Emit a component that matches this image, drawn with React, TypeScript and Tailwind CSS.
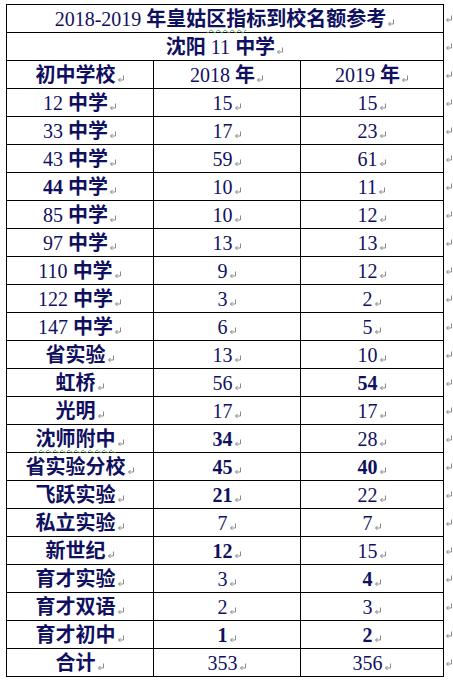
import React from 'react'

type Row = { name: string; a: string; b: string; nb?: boolean; ab?: boolean; bb?: boolean; wavy?: boolean }

const rows: Row[] = [
  { name: '12 中学', a: '15', b: '15' },
  { name: '33 中学', a: '17', b: '23' },
  { name: '43 中学', a: '59', b: '61' },
  { name: '44 中学', a: '10', b: '11', nb: true },
  { name: '85 中学', a: '10', b: '12' },
  { name: '97 中学', a: '13', b: '13' },
  { name: '110 中学', a: '9', b: '12' },
  { name: '122 中学', a: '3', b: '2' },
  { name: '147 中学', a: '6', b: '5' },
  { name: '省实验', a: '13', b: '10' },
  { name: '虹桥', a: '56', b: '54', bb: true },
  { name: '光明', a: '17', b: '17' },
  { name: '沈师附中', a: '34', b: '28', ab: true, wavy: true },
  { name: '省实验分校', a: '45', b: '40', ab: true, bb: true },
  { name: '飞跃实验', a: '21', b: '22', ab: true },
  { name: '私立实验', a: '7', b: '7' },
  { name: '新世纪', a: '12', b: '15', ab: true },
  { name: '育才实验', a: '3', b: '4', bb: true },
  { name: '育才双语', a: '2', b: '3' },
  { name: '育才初中', a: '1', b: '2', ab: true, bb: true },
  { name: '合计', a: '353', b: '356' },
]

function Mark() {
  return (
    <svg width="8" height="8" viewBox="0 0 8 8" className="ml-[1px] inline-block self-end mb-[5px] shrink-0">
      <path d="M6.5 0.5 V5 H1.5" fill="none" stroke="#8a8a8a" strokeWidth="1" />
      <path d="M3.5 3 L1.5 5 L3.5 7" fill="none" stroke="#8a8a8a" strokeWidth="1" />
    </svg>
  )
}

// CJK runs bold, digits/latin regular (mimics the Word screenshot)
function Txt({ text, boldDigits }: { text: string; boldDigits?: boolean }) {
  const parts = text.split(/([\u4e00-\u9fff]+)/).filter(Boolean)
  return (
    <>
      {parts.map((p, i) =>
        /[\u4e00-\u9fff]/.test(p) ? (
          <span key={i} className="font-bold">{p}</span>
        ) : (
          <span key={i} className={boldDigits ? 'font-bold' : 'font-normal'}>{p}</span>
        )
      )}
    </>
  )
}

function Cell(props: { children: React.ReactNode; className?: string }) {
  return (
    <div className={'flex h-[27px] items-center justify-center ' + (props.className ?? '')}>
      <span className="whitespace-pre leading-none">{props.children}</span>
      <Mark />
    </div>
  )
}

export default function App() {
  return (
    <div
      className="h-[682px] w-[453px] overflow-hidden bg-white pl-[6px] pt-[4px] text-[20px] text-[#101060]"
      style={{ fontFamily: '"Liberation Serif", "Noto Sans CJK SC", serif' }}
    >
      <div className="flex">
        <div className="w-[443px] border border-black">
          <Cell>
            <Txt text="2018-2019 年皇姑" />
            <span className="font-bold underline decoration-wavy decoration-[#5aa05a] decoration-1 underline-offset-[3px]">区指</span>
            <Txt text="标到校名额参考" />
          </Cell>
          <div className="border-t border-black">
            <Cell>
              <Txt text="沈阳 11 中学" />
            </Cell>
          </div>
          <div className="grid grid-cols-[147px_147px_1fr] border-t border-black">
            <Cell className="border-r border-black">
              <Txt text="初中学校" />
            </Cell>
            <Cell className="border-r border-black">
              <Txt text="2018 年" />
            </Cell>
            <Cell>
              <Txt text="2019 年" />
            </Cell>
          </div>
          {rows.map((r) => (
            <div key={r.name} className="grid grid-cols-[147px_147px_1fr] border-t border-black">
              <Cell className="border-r border-black">
                {r.wavy ? (
                  <span className="font-bold underline decoration-wavy decoration-[#5aa05a] decoration-1 underline-offset-[3px]">{r.name}</span>
                ) : (
                  <Txt text={r.name} boldDigits={r.nb} />
                )}
              </Cell>
              <Cell className="border-r border-black">
                <span className={r.ab ? 'font-bold' : ''}>{r.a}</span>
              </Cell>
              <Cell>
                <span className={r.bb ? 'font-bold' : ''}>{r.b}</span>
              </Cell>
            </div>
          ))}
        </div>
        <div className="flex flex-col pt-[1px]">
          {Array.from({ length: 24 }).map((_, i) => (
            <div key={i} className="flex h-[28px] items-center pl-[1px]">
              <svg width="8" height="8" viewBox="0 0 8 8">
                <path d="M6.5 0.5 V5 H1.5" fill="none" stroke="#8a8a8a" strokeWidth="1" />
                <path d="M3.5 3 L1.5 5 L3.5 7" fill="none" stroke="#8a8a8a" strokeWidth="1" />
              </svg>
            </div>
          ))}
        </div>
      </div>
    </div>
  )
}
